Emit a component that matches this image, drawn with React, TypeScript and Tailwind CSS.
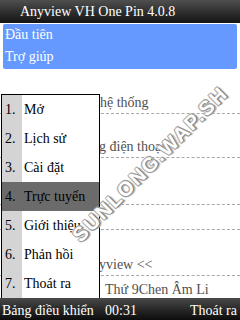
import React from "react";

const serif = { fontFamily: '"Liberation Serif", "Times New Roman", serif' };

const items = ["Mở", "Lịch sử", "Cài đặt", "Trực tuyến", "Giới thiệu", "Phản hồi", "Thoát ra"];

export default function App() {
  return (
    <div
      className="relative w-[240px] h-[320px] overflow-hidden bg-white flex flex-col text-[14px]"
      style={serif}
    >
      {/* Title bar */}
      <div className="h-[23px] shrink-0 bg-linear-to-b from-[#4f4f4f] to-[#141414] text-white leading-[23px] pl-[20px] whitespace-nowrap">
        Anyview VH One Pin 4.0.8
      </div>

      {/* Blue list */}
      <div className="mt-[1px] mx-[3px] h-[45px] shrink-0 rounded-[2px] bg-[#6699ff] text-white">
        <div className="h-[22px] leading-[22px] pl-[2px]">Đầu tiên</div>
        <div className="h-[22px] leading-[22px] pl-[2px]">Trợ giúp</div>
      </div>

      {/* Background content */}
      <div className="flex-1 flex flex-col text-[#505050] leading-[16px] whitespace-nowrap">
        <div className="h-[45px] flex items-end pb-[2px] pl-[100px] border-b border-dashed border-[#a8a8a8]">
          hệ thống
        </div>
        <div className="h-[44px] flex items-end pb-[2px] pl-[99px] border-b border-dashed border-[#a8a8a8]">
          g điện thoại
        </div>
        <div className="h-[47px] border-b border-dashed border-[#a8a8a8]" />
        <div className="h-[25px] border-b border-dashed border-[#a8a8a8]" />
        <div className="h-[46px] flex items-end pb-[2px] pl-[99px] border-b border-dashed border-[#a8a8a8]">
          yview &lt;&lt;
        </div>
        <div className="flex-1 pt-[6px] pl-[105px]">Thứ 9Chen Âm Li</div>
      </div>

      {/* Bottom bar */}
      <div className="relative z-20 h-[24px] shrink-0 bg-linear-to-b from-[#4a4a4a] to-[#080808] text-white flex items-center whitespace-nowrap">
        <span className="w-[105px] pl-[2px]">Bảng điều khiển</span>
        <span>00:31</span>
        <span className="ml-auto pr-[3px]">Thoát ra</span>
      </div>

      {/* Popup menu */}
      <div className="absolute z-10 left-[1px] top-[94px] w-[99px] border border-black bg-white text-black">
        {items.map((t, i) => (
          <div
            key={t}
            className={
              i === 3
                ? "flex h-[29px] items-center bg-[#6b6b6b]"
                : "flex h-[29px] items-center"
            }
          >
            <div
              className={
                i === 3
                  ? "w-[20px] h-full flex items-center pl-[3px] pb-[1px]"
                  : "w-[20px] h-full flex items-center pl-[3px] pb-[1px] bg-[#d4d4d4]"
              }
            >
              {i + 1}.
            </div>
            <div className="pl-[2px] pb-[1px] whitespace-nowrap">{t}</div>
          </div>
        ))}
      </div>

      {/* Watermark */}
      <div
        className="absolute z-30 left-[150px] top-[164px] -translate-x-1/2 -translate-y-1/2 -rotate-45 whitespace-nowrap text-[20px] font-bold tracking-[2px] text-white [text-shadow:1px_1px_0_#808080,-1px_-1px_0_#b0b0b0,1px_-1px_0_#a0a0a0,-1px_1px_0_#a0a0a0,2px_2px_1px_#bbbbbb]"
        style={{ fontFamily: '"Liberation Sans", Arial, sans-serif' }}
      >
        SUNLONG.WAP.SH
      </div>
    </div>
  );
}
